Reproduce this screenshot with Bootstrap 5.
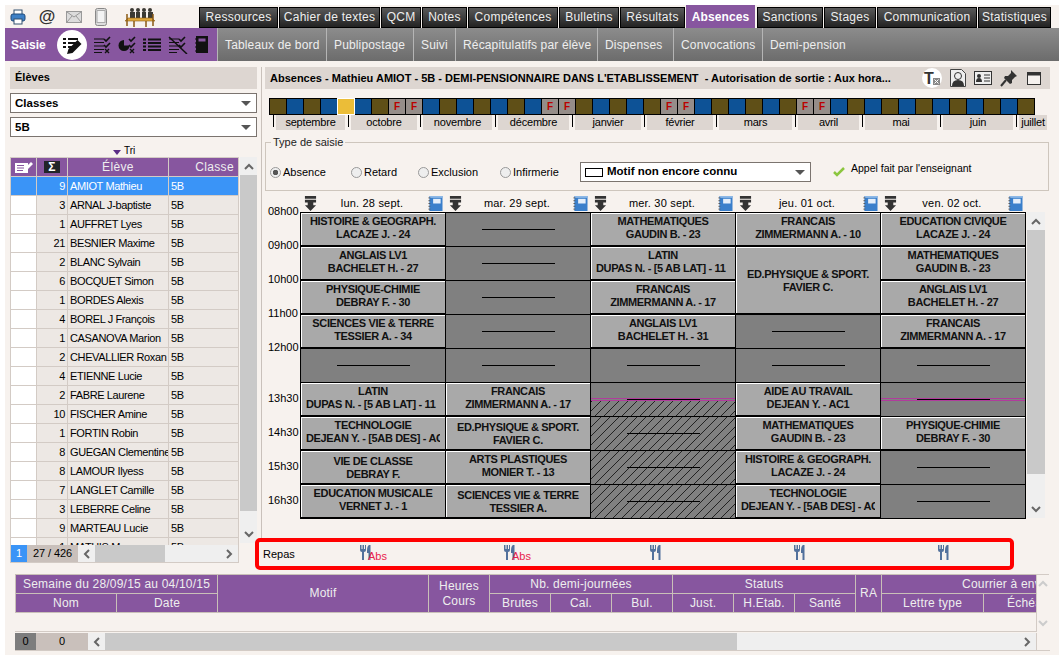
<!DOCTYPE html>
<html lang="fr">
<head>
<meta charset="utf-8">
<title>Absences</title>
<link rel="stylesheet" href="https://cdn.jsdelivr.net/npm/bootstrap@5.3.0/dist/css/bootstrap.min.css">
<style>
body{background:#fff;margin:0;font-family:"Liberation Sans",Arial,sans-serif;font-size:11px;color:#000;overflow:hidden}
.pn-app{margin:5px 0 0 5px;width:1054px;height:650px;background:#f7f2ee;overflow:hidden}
.pn-top{height:23px}
.pn-ic{width:16px;height:16px}
.pn-toolicons{width:194px;height:23px}
.pn-at{font-size:17px;font-weight:700;color:#333;line-height:1;width:18px}
.pn-tab{height:21px;margin:2px 1px 0 0;padding:0 2px;line-height:18px;background:linear-gradient(#595959,#222);color:#eee;border:1px solid #000;font-size:12px;letter-spacing:.25px;white-space:nowrap;text-align:center}
.pn-tab.is-on{height:23px;margin-top:0;background:#87569f;border-color:#87569f;font-weight:700;color:#fff;letter-spacing:.1px;line-height:23px;margin-right:2px}
.pn-sub{height:33px}
.pn-subl{width:212px;background:#87569f;color:#fff}
.pn-subl b{font-size:12px;margin:0 11px 0 6px;width:35px}
.pn-subr{background:linear-gradient(#8c8c8c,#6c6c6c);flex:1}
.pn-subi{color:#eee;font-size:12px;letter-spacing:.15px;padding:0 2px 0 7px;border-left:1px solid #b5b5b5;line-height:34px;white-space:nowrap}
.pn-main{height:513px}
.pn-left{width:247px;margin-left:5px;padding-top:6px;flex:none}
.pn-sep{width:1px;margin:6px 3px 32px 4px;background:#c9c1bb;flex:none}
.pn-right{width:785px;padding-top:6px;flex:none}
.pn-hd{height:22px;background:#ddd6d1;font-weight:700;font-size:11px;line-height:21px;padding-left:5px;white-space:nowrap}
.pn-sel{height:20px;background:#fff;border:1px solid #7b746f;font-weight:700;font-size:11.5px;line-height:18px;padding:0 4px;border-width:1px 1px 1.5px 1px}
.pn-caret{width:0;height:0;border:5px solid transparent;border-top:5px solid #555;border-bottom:0;margin-right:1px}
.pn-tri{height:20px;font-size:10px;padding-left:103px;line-height:28px}
.pn-tri i{display:inline-block;width:0;height:0;border:4.5px solid transparent;border-top:5px solid #5b2d86;border-bottom:0;margin-right:3px;vertical-align:-1px}
.pn-tblwrap{height:388px;overflow:hidden}
.pn-eleves{table-layout:fixed;width:229px;border-collapse:collapse;font-size:11px;letter-spacing:-.38px}
.pn-eleves td,.pn-eleves th{border:1px solid #d3cbc5;height:19px;padding:0 2px;white-space:nowrap;overflow:hidden;line-height:16px}
.pn-eleves th{background:#87569f;color:#eee;font-weight:400;font-size:12px;text-align:center;letter-spacing:.35px;height:19px}
.pn-eleves td:nth-child(1){background:#fff}
.pn-eleves td:nth-child(2){background:#ede8e4;text-align:right;padding-right:2px}
.pn-eleves td:nth-child(n+3){background:#ede8e4}
.pn-eleves tr.is-sel td{background:#3a94f7;color:#fff}
.pn-vs{width:17px;margin-left:1px;background:#efefef;flex:none}
.pn-vs .pn-thumb{background:#c9c9c9}
.pn-arr{height:18px;display:flex;align-items:center;justify-content:center}
.pn-chev{width:10px;height:7px;display:block}
.pn-foot{height:18px;width:229px;border:1px solid #d3cbc5;border-top:0;font-size:11px;line-height:17px}
.pn-foot .pn-n{width:16px;background:#3a94f7;color:#fff;text-align:center}
.pn-foot .pn-c{width:51px;background:#c9c0bb;text-align:center;letter-spacing:-.1px}
.pn-hs{background:#efefef;flex:1}
.pn-hs .pn-thumb{background:#c9c9c9}
.pn-hsa{width:17px;display:flex;align-items:center;justify-content:center}
.pn-hsa .pn-chev{width:7px;height:10px}
.pn-strip{margin:9px 0 0 4px;width:766px;height:17px;background:#000;padding:1px;gap:1px}
.pn-w{width:16px;flex:none;height:15px;font-size:10px;font-weight:700;color:#b00;text-align:center;line-height:15px}
.pn-b{background:#5f4f17}.pn-u{background:#0d5296}.pn-y{background:#ebbd38;outline:1px solid #fff}.pn-f{background:#958d89}
.pn-months{margin:0 0 0 4px;height:15px;gap:0;padding-left:4px}
.pn-m{border-left:1px solid #000;padding-left:2px;height:12px;flex:none}
.pn-m span{display:block;background:#ddd6d1;height:15px;line-height:14px;text-align:center;font-size:11px;letter-spacing:-.2px;margin-right:3px}
.pn-fs{margin:5px 0 0;height:56px;border:1px solid #cec6bd;padding:0 0 0 4px;width:784px;min-width:0}
.pn-fs legend{float:none;width:auto;font-size:11px;line-height:14px;margin:0 0 0 1px;padding:0 2px;color:#222}
.pn-radio{font-size:11px;line-height:14px}
.pn-radio input{width:11px;height:11px;margin:0 2px 0 0;border:1px solid #999;background:#eee;float:none;flex:none}
.pn-radio input:checked{background:radial-gradient(circle,#555 0 2.5px,#eee 3px);border-color:#999}
.pn-motif{width:231px;height:20px;background:#fff;border:1px solid #7b746f;font-weight:700;font-size:11.5px;padding:0 4px}
.pn-swatch{width:18px;height:9px;border:1px solid #000;background:#fff;margin-right:4px}
.pn-ok{margin:0 6px 0 22px}
.pn-appel{font-size:10.5px;margin-bottom:6px}
.pn-days{margin-left:35px;height:21px;padding-top:5px}
.pn-day{width:145px;flex:none;height:16px;font-size:11px;letter-spacing:.2px;padding:0 3px 0 3px;line-height:15px}
.pn-day:first-child{margin-left:1px}
.pn-edt{height:307px}
.pn-hrs{width:35px;flex:none;margin-top:-8px;font-size:11px}
.pn-hrs div{height:34px;line-height:14px;padding-left:3px}
.pn-hrs div.is-long{height:51px}
.pn-grid{display:grid;grid-template-columns:repeat(5,145px);grid-auto-rows:34px;border-left:1px solid #000;border-top:1px solid #000;width:726px;flex:none;background:#808080}
.pn-cell{border-right:1px solid #000;border-bottom:1px solid #000;position:relative;min-width:0}
.pn-cours{background:#a9a9a9;box-shadow:inset 1px 1px 0 #fff;border-bottom:2px solid #000;font-weight:700;font-size:11px;line-height:13px;text-align:center;overflow:clip;overflow-clip-margin:content-box;white-space:nowrap;padding:2px 5px 0;letter-spacing:-.35px;color:#111}
.pn-cours.pn-lt{text-align:left}
.pn-cours.pn-two{grid-row:span 2}
.pn-vide{background:#808080;display:flex;align-items:center;justify-content:center}
.pn-vide::after{content:"";width:73px;height:1px;background:#000;position:relative;z-index:1}
.pn-hach{background:repeating-linear-gradient(135deg,#222 0 .7px,#808080 .7px 6.4px)}
.pn-mid{background:linear-gradient(#808080 17px,transparent 17px),repeating-linear-gradient(135deg,#222 0 .7px,#808080 .7px 6.4px)}
.pn-rose{position:absolute;left:0;right:0;top:15px;height:3px;border-top:1px solid #b03c9c;border-bottom:1px solid #b03c9c;z-index:2}
.pn-edtvs{margin-left:1px;width:18px;height:306px}
.pn-repas{margin:19px 0 0 -10px;width:759px;height:32px;border:4px solid #f00;border-radius:5px;background:#f7f2ee;position:relative;font-size:11px}
.pn-repas>span{padding-left:4px}
.pn-fork{position:absolute;top:2px}
.pn-fork svg{width:13px;height:17px;display:block}
.pn-fork em{position:absolute;left:9px;top:6px;color:#e8214d;font-style:normal;font-size:11px;line-height:12px;font-weight:400}
.pn-bot{height:81px;padding-left:10px}
.pn-bwrap{width:1021px;height:58px;overflow:hidden;flex:none;border-bottom:1px solid #d3cbc5}
.pn-abs{table-layout:fixed;border-collapse:collapse;width:1130px}
.pn-abs th{background:#87569f;color:#eee;font-weight:400;font-size:12px;letter-spacing:.2px;border:1px solid #c9c0b8;height:19px;padding:0;text-align:center;white-space:nowrap;line-height:15px}
.pn-abs td{height:19px;border-bottom:1px solid #d3cbc5;padding:0}
.pn-bvs{width:13px;height:58px;border-top:1px solid #d3cbc5;border-left:1px solid #d3cbc5;padding:5px 0;align-items:center}
.pn-bfoot{height:18px;margin-top:1px;width:1035px;border-bottom:1px solid #d3cbc5;font-size:11px;line-height:17px;text-align:center}
.pn-bfoot .pn-k{width:21px;background:#7d7d7d}
.pn-bfoot .pn-z{width:52px;background:#c9c0bb}
.pn-bfill{width:14px;background:#f7f2ee;border-left:1px solid #d3cbc5}
</style>
</head>
<body>
<svg width="0" height="0" class="position-absolute">
<symbol id="pn-down" viewBox="0 0 14 16"><path d="M1 0h12v3H1zM1 4h12v3h-3v3h3l-6 6-6-6h3V7H1z" fill="#333"/></symbol>
<symbol id="pn-book" viewBox="0 0 16 16"><rect x="2" y="0" width="14" height="16" fill="#3a7fcb"/><rect x="2" y="0" width="14" height="2" fill="#8db8e6"/><rect x="6" y="3" width="8" height="5" fill="#e4eefa"/><path d="M1 2h2M1 5h2M1 8h2M1 11h2M1 14h2" stroke="#555"/></symbol>
<symbol id="pn-fk" viewBox="0 0 13 17"><path d="M1 1v5q0 2 2 2v8h2V8q2 0 2-2V1H6v4H5V1H3.5v4H2.500V1zM10 1q-2 1-2 6v2h1.500v7h2V1z" fill="#52719c"/></symbol>
<symbol id="pn-cu" viewBox="0 0 10 7"><path d="M1 6l4-4 4 4" fill="none" stroke="#666" stroke-width="2"/></symbol>
<symbol id="pn-cd" viewBox="0 0 10 7"><path d="M1 1l4 4 4-4" fill="none" stroke="#666" stroke-width="2"/></symbol>
<symbol id="pn-cl" viewBox="0 0 7 10"><path d="M6 1L2 5l4 4" fill="none" stroke="#666" stroke-width="2"/></symbol>
<symbol id="pn-cr" viewBox="0 0 7 10"><path d="M1 1l4 4-4 4" fill="none" stroke="#666" stroke-width="2"/></symbol>
<symbol id="pn-cul" viewBox="0 0 10 7"><path d="M1 6l4-4 4 4" fill="none" stroke="#ccc" stroke-width="2"/></symbol>
<symbol id="pn-cdl" viewBox="0 0 10 7"><path d="M1 1l4 4 4-4" fill="none" stroke="#ccc" stroke-width="2"/></symbol>
</svg>
<div class="pn-app d-flex flex-column">

  <div class="pn-top d-flex">
    <div class="pn-toolicons d-flex align-items-center position-relative">
      <svg class="pn-ic flex-none" viewBox="0 0 16 16" style="margin-left:5px"><rect x="4" y="1" width="8" height="5" fill="#fff" stroke="#33506f"/><rect x="1" y="5" width="14" height="7" rx="2" fill="#3d80c6" stroke="#1f4a7a"/><rect x="4" y="10" width="8" height="5" fill="#fff" stroke="#33506f"/></svg>
      <span class="pn-at text-center" style="margin-left:12px">@</span>
      <svg class="pn-ic" viewBox="0 0 16 12" style="margin-left:10px"><rect x=".5" y=".5" width="15" height="11" fill="#dcdcdc" stroke="#999"/><path d="M1 1l7 5 7-5M1 11l5-6M15 11l-5-6" fill="none" stroke="#999"/></svg>
      <svg viewBox="0 0 12 18" width="12" height="18" style="margin-left:13px"><rect x=".5" y=".5" width="11" height="17" rx="2" fill="#ddd" stroke="#888"/><rect x="2" y="2.500" width="8" height="12" fill="#f3f3f3" stroke="#aaa"/></svg>
      <svg viewBox="0 0 32 20" width="32" height="20" style="margin-left:17px"><g fill="#3b3a34"><circle cx="8" cy="3" r="2"/><circle cx="14" cy="3" r="2"/><circle cx="20" cy="3" r="2"/><circle cx="26" cy="3" r="2"/><path d="M6 5h5v6H6zM12 5h4v6h-4zM18 5h4v6h-4zM24 5h5v6h-5z"/></g><path d="M4 11h24l3 3H1z" fill="#e0a93e" stroke="#8a5a14" stroke-width=".6"/><path d="M3 7v12M29 7v12M10 14v6M22 14v6" stroke="#8a5a14" stroke-width="1.500"/></svg>
    </div>
    <div class="pn-tab" style="width:79px">Ressources</div>
    <div class="pn-tab" style="width:101px">Cahier de textes</div>
    <div class="pn-tab" style="width:40px">QCM</div>
    <div class="pn-tab" style="width:45px">Notes</div>
    <div class="pn-tab" style="width:90px">Compétences</div>
    <div class="pn-tab" style="width:60px">Bulletins</div>
    <div class="pn-tab" style="width:65px">Résultats</div>
    <div class="pn-tab is-on" style="width:69px">Absences</div>
    <div class="pn-tab" style="width:66px">Sanctions</div>
    <div class="pn-tab" style="width:52px">Stages</div>
    <div class="pn-tab" style="width:100px">Communication</div>
    <div class="pn-tab" style="width:73px">Statistiques</div>
  </div>

  <div class="pn-sub d-flex">
    <div class="pn-subl d-flex align-items-center">
      <b>Saisie</b>
      <svg viewBox="0 0 30 30" width="30" height="30"><circle cx="15" cy="15" r="15" fill="#fff"/><path d="M6 8h3v2H6zM11 8h10v2H11zM6 12h3v2H6zM11 12h8v2h-8zM6 16h3v2H6zM11 16h5v2h-5z" fill="#111"/><path d="M10 24l1.500-5 9-9 4 4-9 9z" fill="#111"/></svg>
      <svg viewBox="0 0 18 18" width="18" height="18" style="margin-left:6px"><path d="M1 3h10M1 6.500h10M1 10h10M1 13.500h10M1 16.500h8" stroke="#111" stroke-width="1.200"/><path d="M11 3l2 2 4-4M11 9l2 2 4-4" stroke="#111" stroke-width="1.600" fill="none"/><path d="M12 13l4 4M16 13l-4 4" stroke="#111" stroke-width="1.400"/></svg>
      <svg viewBox="0 0 18 18" width="18" height="18" style="margin-left:7px"><path d="M6 4a5.500 5.500 0 1 0 5.500 5.500H6z" fill="#111"/><path d="M11 3l2 2 4-4M11 9l2 2 4-4" stroke="#111" stroke-width="1.600" fill="none"/><path d="M12 13l4 4M16 13l-4 4" stroke="#111" stroke-width="1.400"/></svg>
      <svg viewBox="0 0 18 14" width="18" height="14" style="margin-left:7px"><path d="M0 1.500h3M5 1.500h13M0 5h3M5 5h13M0 8.500h3M5 8.500h13M0 12h3M5 12h13" stroke="#111" stroke-width="2"/></svg>
      <svg viewBox="0 0 20 18" width="20" height="18" style="margin-left:7px"><path d="M1 3h10M1 6.500h10M1 10h10M1 13.500h10M1 16.500h8" stroke="#111" stroke-width="1.200"/><path d="M11 3l2 2 4-4M11 9l2 2 4-4" stroke="#111" stroke-width="1.600" fill="none"/><path d="M1 1l18 17" stroke="#111" stroke-width="1.500"/></svg>
      <svg viewBox="0 0 13 17" width="13" height="17" style="margin-left:7px"><rect x="1" y="0" width="12" height="17" fill="#111"/><rect x="3.500" y="2.500" width="7" height="3" fill="#87569f"/><path d="M0 3h2M0 7h2M0 11h2M0 15h2" stroke="#111"/></svg>
    </div>
    <div class="pn-subr d-flex">
      <div class="pn-subi" style="width:109px">Tableaux de bord</div>
      <div class="pn-subi" style="width:87px">Publipostage</div>
      <div class="pn-subi" style="width:42px">Suivi</div>
      <div class="pn-subi" style="width:142px">Récapitulatifs par élève</div>
      <div class="pn-subi" style="width:76px">Dispenses</div>
      <div class="pn-subi" style="width:89px">Convocations</div>
      <div class="pn-subi">Demi-pension</div>
    </div>
  </div>

  <div class="pn-main d-flex">
    <div class="pn-left">
      <div class="pn-hd">Élèves</div>
      <div class="pn-sel d-flex align-items-center justify-content-between mt-1 mb-1">Classes<span class="pn-caret"></span></div>
      <div class="pn-sel d-flex align-items-center justify-content-between">5B<span class="pn-caret"></span></div>
      <div class="pn-tri"><i></i>Tri</div>
      <div class="d-flex">
        <div>
          <div class="pn-tblwrap">
            <table class="pn-eleves">
              <colgroup><col style="width:26px"><col style="width:31px"><col style="width:101px"><col style="width:70px"></colgroup>
              <thead><tr>
                <th><svg viewBox="0 0 18 14" width="18" height="14" class="d-block m-auto"><rect x="0" y="3" width="13" height="10" fill="#fff"/><path d="M2 5.500h7M2 8h7M2 10.500h6" stroke="#87569f"/><path d="M9 11l1-3 6-6 2 2-6 6z" fill="#fff"/></svg></th>
                <th><span class="d-inline-block bg-dark text-white px-1 fw-bold lh-1">Σ</span></th>
                <th>Élève</th><th class="text-end pe-1">Classe</th>
              </tr></thead>
              <tbody>
                <tr class="is-sel"><td></td><td>9</td><td>AMIOT Mathieu</td><td>5B</td></tr>
                <tr><td></td><td>3</td><td>ARNAL J-baptiste</td><td>5B</td></tr>
                <tr><td></td><td>1</td><td>AUFFRET Lyes</td><td>5B</td></tr>
                <tr><td></td><td>21</td><td>BESNIER Maxime</td><td>5B</td></tr>
                <tr><td></td><td>2</td><td>BLANC Sylvain</td><td>5B</td></tr>
                <tr><td></td><td>6</td><td>BOCQUET Simon</td><td>5B</td></tr>
                <tr><td></td><td>1</td><td>BORDES Alexis</td><td>5B</td></tr>
                <tr><td></td><td>4</td><td>BOREL J François</td><td>5B</td></tr>
                <tr><td></td><td>1</td><td>CASANOVA Marion</td><td>5B</td></tr>
                <tr><td></td><td>2</td><td>CHEVALLIER Roxan</td><td>5B</td></tr>
                <tr><td></td><td>4</td><td>ETIENNE Lucie</td><td>5B</td></tr>
                <tr><td></td><td>2</td><td>FABRE Laurene</td><td>5B</td></tr>
                <tr><td></td><td>10</td><td>FISCHER Amine</td><td>5B</td></tr>
                <tr><td></td><td>1</td><td>FORTIN Robin</td><td>5B</td></tr>
                <tr><td></td><td>8</td><td>GUEGAN Clementine</td><td>5B</td></tr>
                <tr><td></td><td>8</td><td>LAMOUR Ilyess</td><td>5B</td></tr>
                <tr><td></td><td>7</td><td>LANGLET Camille</td><td>5B</td></tr>
                <tr><td></td><td>3</td><td>LEBERRE Celine</td><td>5B</td></tr>
                <tr><td></td><td>9</td><td>MARTEAU Lucie</td><td>5B</td></tr>
                <tr><td></td><td>1</td><td>MATHIS M</td><td>5B</td></tr>
              </tbody>
            </table>
          </div>
          <div class="pn-foot d-flex">
            <div class="pn-n">1</div><div class="pn-c">27 / 426</div>
            <div class="pn-hs d-flex">
              <div class="pn-hsa"><svg class="pn-chev"><use href="#pn-cl"/></svg></div><div class="pn-thumb" style="width:70px"></div><div class="flex-grow-1"></div><div class="pn-hsa"><svg class="pn-chev"><use href="#pn-cr"/></svg></div>
            </div>
          </div>
        </div>
        <div class="pn-vs d-flex flex-column" style="height:386px">
          <div class="pn-arr"><svg class="pn-chev"><use href="#pn-cu"/></svg></div>
          <div class="pn-thumb" style="height:336px"></div>
          <div class="flex-grow-1"></div>
          <div class="pn-arr"><svg class="pn-chev"><use href="#pn-cd"/></svg></div>
        </div>
      </div>
    </div>
    <div class="pn-sep"></div>
    <div class="pn-right">
      <div class="pn-hd d-flex align-items-center justify-content-between"><span>Absences - Mathieu AMIOT - 5B - DEMI-PENSIONNAIRE DANS L'ETABLISSEMENT &nbsp;- Autorisation de sortie : Aux hora...</span>
        <span class="d-flex align-items-center" style="gap:8px;padding-right:9px">
          <svg viewBox="0 0 20 20" width="20" height="20"><circle cx="10" cy="10" r="10" fill="#fff"/><text x="2" y="16" font-family="Liberation Sans" font-weight="700" font-size="16" fill="#333">T</text><rect x="11" y="10" width="7" height="7" fill="#888"/><path d="M12.500 11.500l4 4M16.500 11.500l-4 4" stroke="#fff"/></svg>
          <svg viewBox="0 0 16 18" width="16" height="18"><path d="M.5.5h11l4 4v13H.5z" fill="#eee" stroke="#444"/><circle cx="8" cy="7" r="3.500" fill="none" stroke="#333"/><path d="M2 17q0-6 6-6t6 6z" fill="#333"/></svg>
          <svg viewBox="0 0 18 14" width="18" height="14"><rect x=".5" y=".5" width="17" height="13" fill="#eee" stroke="#333"/><circle cx="5" cy="5" r="2" fill="#333"/><path d="M2 11q0-4 3-4t3 4z" fill="#333"/><path d="M10 4h6M10 7h6M10 10h6" stroke="#333"/></svg>
          <svg viewBox="0 0 18 18" width="18" height="18"><path d="M11 1l6 6-2 1-3 3 0 3-2 1-6-6 1-2 3 0 3-3z" fill="#333"/><path d="M6 11l-5 6" stroke="#333" stroke-width="2"/></svg>
          <svg viewBox="0 0 14 13" width="14" height="13" style="margin-left:1px"><rect x=".5" y=".5" width="13" height="12" fill="#f5f1ee" stroke="#333"/><rect x="0" y="0" width="14" height="3.500" fill="#333"/></svg>
        </span>
      </div>
      <div class="pn-strip d-flex">
        <div class="pn-w pn-b"></div><div class="pn-w pn-u"></div><div class="pn-w pn-b"></div><div class="pn-w pn-u"></div><div class="pn-w pn-y"></div>
        <div class="pn-w pn-u"></div><div class="pn-w pn-b"></div><div class="pn-w pn-f">F</div><div class="pn-w pn-f">F</div><div class="pn-w pn-u"></div>
        <div class="pn-w pn-b"></div><div class="pn-w pn-u"></div><div class="pn-w pn-b"></div><div class="pn-w pn-u"></div><div class="pn-w pn-b"></div>
        <div class="pn-w pn-u"></div><div class="pn-w pn-f">F</div><div class="pn-w pn-f">F</div><div class="pn-w pn-b"></div><div class="pn-w pn-u"></div>
        <div class="pn-w pn-b"></div><div class="pn-w pn-u"></div><div class="pn-w pn-b"></div><div class="pn-w pn-f">F</div><div class="pn-w pn-f">F</div>
        <div class="pn-w pn-u"></div><div class="pn-w pn-b"></div><div class="pn-w pn-u"></div><div class="pn-w pn-b"></div><div class="pn-w pn-u"></div>
        <div class="pn-w pn-b"></div><div class="pn-w pn-f">F</div><div class="pn-w pn-f">F</div><div class="pn-w pn-u"></div><div class="pn-w pn-b"></div>
        <div class="pn-w pn-u"></div><div class="pn-w pn-b"></div><div class="pn-w pn-u"></div><div class="pn-w pn-b"></div><div class="pn-w pn-u"></div>
        <div class="pn-w pn-b"></div><div class="pn-w pn-u"></div><div class="pn-w pn-b"></div><div class="pn-w pn-u"></div><div class="pn-w pn-b"></div>
      </div>
      <div class="pn-months d-flex">
        <div class="pn-m" style="width:75px"><span>septembre</span></div>
        <div class="pn-m" style="width:72px"><span>octobre</span></div>
        <div class="pn-m" style="width:75px"><span>novembre</span></div>
        <div class="pn-m" style="width:77px"><span>décembre</span></div>
        <div class="pn-m" style="width:72px"><span>janvier</span></div>
        <div class="pn-m" style="width:72px"><span>février</span></div>
        <div class="pn-m" style="width:79px"><span>mars</span></div>
        <div class="pn-m" style="width:67px"><span>avril</span></div>
        <div class="pn-m" style="width:78px"><span>mai</span></div>
        <div class="pn-m" style="width:76px"><span>juin</span></div>
        <div class="pn-m" style="width:31px"><span class="me-0">juillet</span></div>
      </div>
      <fieldset class="pn-fs">
        <legend>Type de saisie</legend>
        <div class="d-flex align-items-center" style="height:34px;padding-top:12px">
          <label class="pn-radio d-flex align-items-center" style="width:81px"><input class="form-check-input" type="radio" name="t" checked> Absence</label>
          <label class="pn-radio d-flex align-items-center" style="width:67px"><input class="form-check-input" type="radio" name="t"> Retard</label>
          <label class="pn-radio d-flex align-items-center" style="width:82px"><input class="form-check-input" type="radio" name="t"> Exclusion</label>
          <label class="pn-radio d-flex align-items-center" style="width:80px"><input class="form-check-input" type="radio" name="t"> Infirmerie</label>
          <div class="pn-motif d-flex align-items-center"><span class="pn-swatch"></span><span class="flex-grow-1">Motif non encore connu</span><span class="pn-caret"></span></div>
          <svg class="pn-ok" viewBox="0 0 12 10" width="12" height="10"><path d="M1 5l3 3 7-7" fill="none" stroke="#8cc63f" stroke-width="2.500"/></svg>
          <span class="pn-appel">Appel fait par l'enseignant</span>
        </div>
      </fieldset>
      <div class="pn-days d-flex">
        <div class="pn-day d-flex justify-content-between"><svg width="13" height="15"><use href="#pn-down"/></svg><span>lun. 28 sept.</span><svg width="16" height="15"><use href="#pn-book"/></svg></div>
        <div class="pn-day d-flex justify-content-between"><svg width="13" height="15"><use href="#pn-down"/></svg><span>mar. 29 sept.</span><svg width="16" height="15"><use href="#pn-book"/></svg></div>
        <div class="pn-day d-flex justify-content-between"><svg width="13" height="15"><use href="#pn-down"/></svg><span>mer. 30 sept.</span><svg width="16" height="15"><use href="#pn-book"/></svg></div>
        <div class="pn-day d-flex justify-content-between"><svg width="13" height="15"><use href="#pn-down"/></svg><span>jeu. 01 oct.</span><svg width="16" height="15"><use href="#pn-book"/></svg></div>
        <div class="pn-day d-flex justify-content-between"><svg width="13" height="15"><use href="#pn-down"/></svg><span>ven. 02 oct.</span><svg width="16" height="15"><use href="#pn-book"/></svg></div>
      </div>
      <div class="pn-edt d-flex">
        <div class="pn-hrs">
          <div>08h00</div><div>09h00</div><div>10h00</div><div>11h00</div><div class="is-long">12h00</div><div>13h30</div><div>14h30</div><div>15h30</div><div>16h30</div>
        </div>
        <div class="pn-grid">
          <div class="pn-cell pn-cours">HISTOIRE &amp; GEOGRAPH.<br>LACAZE J. - 24</div>
          <div class="pn-cell pn-vide"></div>
          <div class="pn-cell pn-cours">MATHEMATIQUES<br>GAUDIN B. - 23</div>
          <div class="pn-cell pn-cours">FRANCAIS<br>ZIMMERMANN A. - 10</div>
          <div class="pn-cell pn-cours">EDUCATION CIVIQUE<br>LACAZE J. - 24</div>

          <div class="pn-cell pn-cours">ANGLAIS LV1<br>BACHELET H. - 27</div>
          <div class="pn-cell pn-vide"></div>
          <div class="pn-cell pn-cours pn-lt"><div class="text-center">LATIN</div>DUPAS N. - [5 AB LAT] - 11</div>
          <div class="pn-cell pn-cours pn-two d-flex align-items-center justify-content-center"><div>ED.PHYSIQUE &amp; SPORT.<br>FAVIER C.</div></div>
          <div class="pn-cell pn-cours">MATHEMATIQUES<br>GAUDIN B. - 23</div>

          <div class="pn-cell pn-cours">PHYSIQUE-CHIMIE<br>DEBRAY F. - 30</div>
          <div class="pn-cell pn-vide"></div>
          <div class="pn-cell pn-cours">FRANCAIS<br>ZIMMERMANN A. - 17</div>
          <div class="pn-cell pn-cours">ANGLAIS LV1<br>BACHELET H. - 27</div>

          <div class="pn-cell pn-cours">SCIENCES VIE &amp; TERRE<br>TESSIER A. - 34</div>
          <div class="pn-cell pn-vide"></div>
          <div class="pn-cell pn-cours">ANGLAIS LV1<br>BACHELET H. - 31</div>
          <div class="pn-cell pn-vide"></div>
          <div class="pn-cell pn-cours">FRANCAIS<br>ZIMMERMANN A. - 17</div>

          <div class="pn-cell pn-vide"></div><div class="pn-cell pn-vide"></div><div class="pn-cell pn-vide"></div><div class="pn-cell pn-vide"></div><div class="pn-cell pn-vide"></div>

          <div class="pn-cell pn-cours pn-lt"><div class="text-center">LATIN</div>DUPAS N. - [5 AB LAT] - 11</div>
          <div class="pn-cell pn-cours">FRANCAIS<br>ZIMMERMANN A. - 17</div>
          <div class="pn-cell pn-vide pn-mid"><span class="pn-rose"></span></div>
          <div class="pn-cell pn-cours">AIDE AU TRAVAIL<br>DEJEAN Y. - AC1</div>
          <div class="pn-cell pn-vide"><span class="pn-rose"></span></div>

          <div class="pn-cell pn-cours pn-lt"><div class="text-center">TECHNOLOGIE</div>DEJEAN Y. - [5AB DES] - AC1</div>
          <div class="pn-cell pn-cours d-flex align-items-center justify-content-center"><div>ED.PHYSIQUE &amp; SPORT.<br>FAVIER C.</div></div>
          <div class="pn-cell pn-vide pn-hach"></div>
          <div class="pn-cell pn-cours">MATHEMATIQUES<br>GAUDIN B. - 23</div>
          <div class="pn-cell pn-cours">PHYSIQUE-CHIMIE<br>DEBRAY F. - 30</div>

          <div class="pn-cell pn-cours d-flex align-items-center justify-content-center"><div>VIE DE CLASSE<br>DEBRAY F.</div></div>
          <div class="pn-cell pn-cours">ARTS PLASTIQUES<br>MONIER T. - 13</div>
          <div class="pn-cell pn-vide pn-hach"></div>
          <div class="pn-cell pn-cours">HISTOIRE &amp; GEOGRAPH.<br>LACAZE J. - 24</div>
          <div class="pn-cell pn-vide"></div>

          <div class="pn-cell pn-cours">EDUCATION MUSICALE<br>VERNET J. - 1</div>
          <div class="pn-cell pn-cours d-flex align-items-center justify-content-center"><div>SCIENCES VIE &amp; TERRE<br>TESSIER A.</div></div>
          <div class="pn-cell pn-vide pn-hach"></div>
          <div class="pn-cell pn-cours pn-lt"><div class="text-center">TECHNOLOGIE</div>DEJEAN Y. - [5AB DES] - AC1</div>
          <div class="pn-cell pn-vide"></div>
        </div>
        <div class="pn-vs pn-edtvs d-flex flex-column">
          <div class="pn-arr"><svg class="pn-chev"><use href="#pn-cu"/></svg></div>
          <div class="pn-thumb" style="height:244px"></div>
          <div class="flex-grow-1"></div>
          <div class="pn-arr"><svg class="pn-chev"><use href="#pn-cd"/></svg></div>
        </div>
      </div>
      <div class="pn-repas d-flex align-items-center">
        <span>Repas</span>
        <div class="pn-fork" style="left:100px"><svg><use href="#pn-fk"/></svg><em>Abs</em></div>
        <div class="pn-fork" style="left:244px"><svg><use href="#pn-fk"/></svg><em>Abs</em></div>
        <div class="pn-fork" style="left:390px"><svg><use href="#pn-fk"/></svg></div>
        <div class="pn-fork" style="left:534px"><svg><use href="#pn-fk"/></svg></div>
        <div class="pn-fork" style="left:678px"><svg><use href="#pn-fk"/></svg></div>
      </div>
    </div>
  </div>

  <div class="pn-bot">
    <div class="d-flex">
      <div class="pn-bwrap">
        <table class="pn-abs">
          <colgroup><col style="width:101px"><col style="width:101px"><col style="width:211px"><col style="width:61px"><col style="width:61px"><col style="width:61px"><col style="width:61px"><col style="width:61px"><col style="width:61px"><col style="width:61px"><col style="width:26px"><col style="width:102px"><col style="width:102px"><col style="width:60px"></colgroup>
          <thead>
            <tr><th colspan="2">Semaine du 28/09/15 au 04/10/15</th><th rowspan="2">Motif</th><th rowspan="2">Heures<br>Cours</th><th colspan="3">Nb. demi-journées</th><th colspan="3">Statuts</th><th rowspan="2">RA</th><th colspan="3">Courrier à envoyer</th></tr>
            <tr><th>Nom</th><th>Date</th><th>Brutes</th><th>Cal.</th><th>Bul.</th><th>Just.</th><th>H.Etab.</th><th>Santé</th><th>Lettre type</th><th>Échéance</th><th></th></tr>
          </thead>
          <tbody><tr><td colspan="14"></td></tr></tbody>
        </table>
      </div>
      <div class="pn-bvs d-flex flex-column justify-content-between"><svg class="pn-chev"><use href="#pn-cul"/></svg><svg class="pn-chev"><use href="#pn-cdl"/></svg></div>
    </div>
    <div class="pn-bfoot d-flex">
      <div class="pn-k">0</div><div class="pn-z">0</div>
      <div class="pn-hs d-flex">
        <div class="pn-hsa"><svg class="pn-chev"><use href="#pn-cl"/></svg></div><div class="pn-thumb" style="width:632px"></div><div class="flex-grow-1"></div><div class="pn-hsa"><svg class="pn-chev"><use href="#pn-cr"/></svg></div><span class="pn-bfill"></span>
      </div>
    </div>
  </div>
</div>
</body>
</html>
